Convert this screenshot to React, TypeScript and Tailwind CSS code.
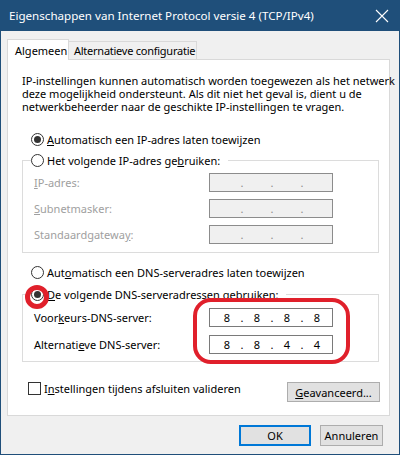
import React from "react";

function Radio({ checked }: { checked?: boolean }) {
  return (
    <span className="w-[13px] h-[13px] rounded-full border border-[#333333] bg-white flex items-center justify-center shrink-0">
      {checked && <span className="w-[7px] h-[7px] rounded-full bg-[#333333]" />}
    </span>
  );
}

function IpBox({ values, disabled }: { values?: string[]; disabled?: boolean }) {
  const v = values ?? ["", "", "", ""];
  return (
    <div
      className={
        disabled
          ? "w-[124px] h-[19px] border border-[#8c8c8c] bg-[#f0f0f0] flex items-center pl-[5px] text-[#8c8c8c]"
          : "w-[124px] h-[19px] border border-[#7a7a7a] bg-white flex items-center pl-[5px] text-black"
      }
    >
      <span className="w-[24px] text-center">{v[0]}</span>
      <span className="w-[6px] text-center">.</span>
      <span className="w-[24px] text-center">{v[1]}</span>
      <span className="w-[6px] text-center">.</span>
      <span className="w-[24px] text-center">{v[2]}</span>
      <span className="w-[6px] text-center">.</span>
      <span className="w-[24px] text-center">{v[3]}</span>
    </div>
  );
}

export default function App() {
  return (
    <div className="relative w-[400px] h-[455px] bg-[#f0f0f0] border-x border-b border-[#1f4f7a] flex flex-col font-['Noto_Sans',sans-serif] text-[11px] leading-[15px] text-black overflow-hidden whitespace-nowrap">
      {/* Title bar */}
      <div className="h-[31px] -mx-px bg-[#1f4f7a] flex items-center justify-between pl-[9px] pr-[10px] text-white">
        <span className="text-[11.6px]">Eigenschappen van Internet Protocol versie 4 (TCP/IPv4)</span>
        <svg width="14" height="14" viewBox="0 0 14 14" className="mr-[1px]">
          <path d="M1 1 L13 13 M13 1 L1 13" stroke="white" strokeWidth="1.1" />
        </svg>
      </div>

      {/* Tabs */}
      <div className="mt-[8px] pl-[6px] flex items-end h-[20px]">
        <div className="relative z-10 h-[21px] -mb-px bg-white border-x border-t border-[#d9d9d9] pl-[7px] flex items-center w-[62px] shrink-0">
          Algemeen
        </div>
        <div className="h-[18px] border-r border-t border-[#d9d9d9] pl-[5px] flex items-center w-[128px] shrink-0 overflow-hidden tracking-[-0.25px]">
          Alternatieve configuratie
        </div>
      </div>

      {/* Panel */}
      <div className="ml-[6px] w-[383px] h-[357px] bg-white border border-[#d9d9d9] pt-[14px] flex flex-col">
        <p className="pl-[14px] leading-[13px]">
          IP-instellingen kunnen automatisch worden toegewezen als het netwerk
          <br />
          deze mogelijkheid ondersteunt. Als dit niet het geval is, dient u de
          <br />
          netwerkbeheerder naar de geschikte IP-instellingen te vragen.
        </p>

        <div className="ml-[23px] mt-[19px] h-[15px] flex items-center gap-[3px]">
          <Radio checked />
          <span>
            <span className="underline">A</span>utomatisch een IP-adres laten toewijzen
          </span>
        </div>

        <fieldset className="ml-[14px] mt-[5px] w-[357px] border border-[#dcdcdc] pl-[8px] pt-[5px] pb-[8px]">
          <legend className="bg-white pr-[8px] h-[16px] flex items-center gap-[3px]">
            <Radio />
            <span>
              Het volgende IP-adres ge<span className="underline">b</span>ruiken:
            </span>
          </legend>
          <div className="flex flex-col gap-[7px] text-[#a0a0a0]">
            <div className="flex items-center h-[19px]">
              <span className="ml-[3px] w-[175px]">
                <span className="underline">I</span>P-adres:
              </span>
              <IpBox disabled />
            </div>
            <div className="flex items-center h-[19px]">
              <span className="ml-[3px] w-[175px]">
                <span className="underline">S</span>ubnetmasker:
              </span>
              <IpBox disabled />
            </div>
            <div className="flex items-center h-[19px]">
              <span className="ml-[3px] w-[175px]">
                Standaardgatewa<span className="underline">y</span>:
              </span>
              <IpBox disabled />
            </div>
          </div>
        </fieldset>

        <div className="ml-[23px] mt-[12px] h-[15px] flex items-center gap-[3px]">
          <Radio />
          <span>
            Aut<span className="underline">o</span>matisch een DNS-serveradres laten toewijzen
          </span>
        </div>

        <fieldset className="ml-[14px] mt-[6px] w-[357px] border border-[#dcdcdc] pl-[8px] pt-[6px] pb-[7px]">
          <legend className="bg-white pr-[8px] h-[16px] flex items-center gap-[3px]">
            <Radio checked />
            <span>
              <span className="underline">D</span>e volgende DNS-serveradressen gebruiken:
            </span>
          </legend>
          <div className="flex flex-col gap-[8px]">
            <div className="flex items-center h-[19px]">
              <span className="ml-[3px] w-[175px]">
                Voor<span className="underline">k</span>eurs-DNS-server:
              </span>
              <IpBox values={["8", "8", "8", "8"]} />
            </div>
            <div className="flex items-center h-[19px]">
              <span className="ml-[3px] w-[175px]">
                Alternati<span className="underline">e</span>ve DNS-server:
              </span>
              <IpBox values={["8", "8", "4", "4"]} />
            </div>
          </div>
        </fieldset>

        <div className="mt-[20px] ml-[20px] mr-[9px] flex items-start justify-between">
          <div className="flex items-center gap-[3px] h-[13px]">
            <span className="w-[13px] h-[13px] border border-[#333333] bg-white shrink-0" />
            <span>
              I<span className="underline">n</span>stellingen tijdens afsluiten valideren
            </span>
          </div>
          <button className="w-[93px] h-[20px] bg-[#e1e1e1] border border-[#adadad] flex items-center justify-center">
            <span>
              <span className="underline">G</span>eavanceerd...
            </span>
          </button>
        </div>
      </div>

      {/* Buttons */}
      <div className="mt-[9px] pr-[16px] flex justify-end gap-[9px]">
        <button className="w-[72px] h-[21px] bg-[#e1e1e1] border-2 border-[#0078d7] flex items-center justify-center">
          OK
        </button>
        <button className="w-[63px] h-[21px] bg-[#e1e1e1] border border-[#adadad] flex items-center justify-center">
          Annuleren
        </button>
      </div>

      {/* Red annotations */}
      <div className="absolute left-[24px] top-[285px] w-[24px] h-[24px] rounded-full border-[5px] border-[#e0202b]" />
      <div className="absolute left-[192px] top-[298px] w-[157px] h-[66px] rounded-[18px] border-4 border-[#e0202b]" />
    </div>
  );
}
